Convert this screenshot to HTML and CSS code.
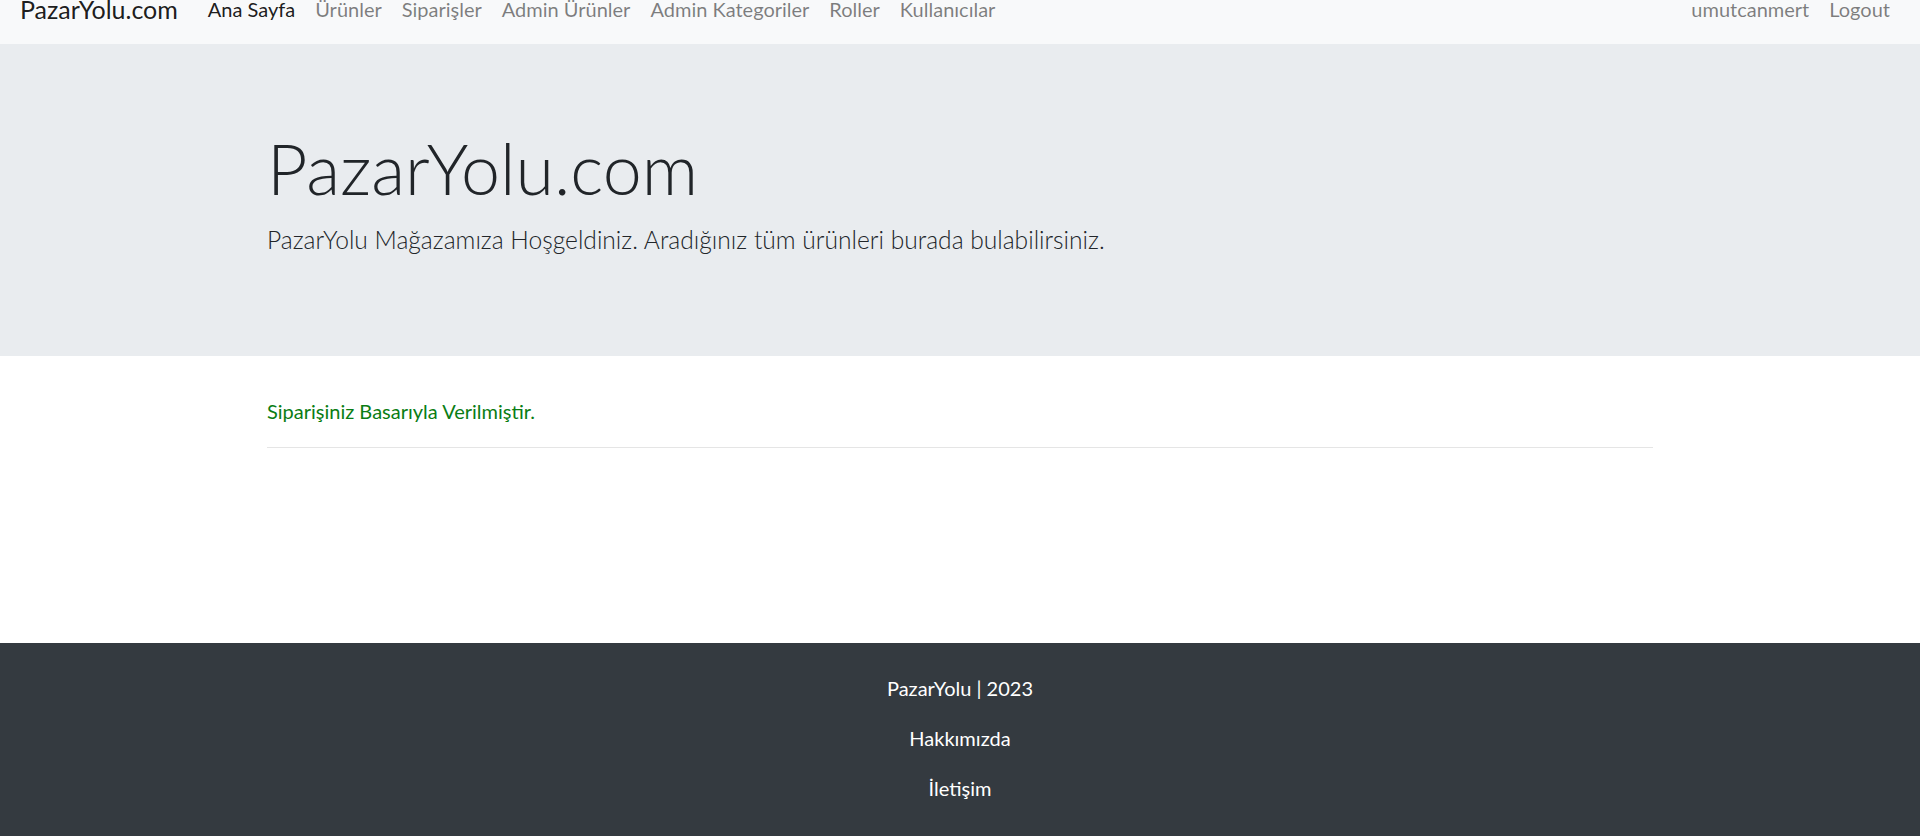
FILE: index.html
```html
<!DOCTYPE html>
<html lang="tr">
<head>
<meta charset="utf-8">
<title>PazarYolu.com</title>
<link rel="stylesheet" href="styles.css">
</head>
<body>
<header class="navbar">
  <a class="brand" href="#">PazarYolu.com</a>
  <ul class="nav">
    <li><a class="nav-link active" href="#">Ana Sayfa</a></li>
    <li><a class="nav-link" href="#">Ürünler</a></li>
    <li><a class="nav-link" href="#">Siparişler</a></li>
    <li><a class="nav-link" href="#">Admin Ürünler</a></li>
    <li><a class="nav-link" href="#">Admin Kategoriler</a></li>
    <li><a class="nav-link" href="#">Roller</a></li>
    <li><a class="nav-link" href="#">Kullanıcılar</a></li>
  </ul>
  <ul class="nav nav-right">
    <li><a class="nav-link" href="#">umutcanmert</a></li>
    <li><a class="nav-link" href="#">Logout</a></li>
  </ul>
</header>

<section class="jumbotron">
  <div class="container">
    <h1 class="display">PazarYolu.com</h1>
    <p class="lead">PazarYolu Mağazamıza Hoşgeldiniz. Aradığınız tüm ürünleri burada bulabilirsiniz.</p>
  </div>
</section>

<main class="main">
  <div class="container">
    <p class="success">Siparişiniz Basarıyla Verilmiştir.</p>
    <hr class="divider">
  </div>
</main>

<footer class="footer">
  <p>PazarYolu | 2023</p>
  <p><a href="#">Hakkımızda</a></p>
  <p><a href="#">İletişim</a></p>
</footer>
</body>
</html>
```

FILE: styles.css
```css
* { box-sizing: border-box; }

html, body { margin: 0; padding: 0; }

body {
  font-family: Lato, "Open Sans", "DejaVu Sans", sans-serif;
  font-size: 20px;
  line-height: 1.5;
  color: #212529;
  background: #fff;
  min-height: 836px;
  display: flex;
  flex-direction: column;
  overflow: hidden;
}

a { text-decoration: none; }

.navbar {
  display: flex;
  align-items: center;
  height: 70px;
  margin-top: -26px;
  padding: 10px 20px;
  background: #f8f9fa;
  flex-shrink: 0;
}

.brand {
  font-size: 25px;
  line-height: 37.5px;
  padding: 7px 0 5.5px;
  margin-right: 20px;
  color: rgba(0, 0, 0, 0.9);
}

.nav {
  display: flex;
  list-style: none;
  margin: 0;
  padding: 0;
}

.nav-right { margin-left: auto; }

.nav-link {
  display: block;
  padding: 10px;
  line-height: 30px;
  color: rgba(0, 0, 0, 0.5);
}

.nav-link.active { color: rgba(0, 0, 0, 0.9); }

.jumbotron {
  background: #e9ecef;
  padding: 82px 0 78px;
  margin-bottom: 40px;
  flex-shrink: 0;
}

.container {
  width: 1386px;
  margin: 0 auto;
}

.display {
  font-size: 70px;
  font-weight: 300;
  line-height: 84px;
  margin: 0 0 11px;
}

.lead {
  font-size: 24.6px;
  font-weight: 300;
  line-height: 37.5px;
  margin: 0 0 19.5px;
}

.main { flex: 1; }

.success {
  color: #0a7d14;
  margin: 0;
  line-height: 30px;
}

.divider {
  border: 0;
  border-top: 1px solid rgba(0, 0, 0, 0.1);
  margin: 21px 0 0;
}

.footer {
  background: #343a40;
  color: #fff;
  text-align: center;
  padding: 30px 0 33px;
  flex-shrink: 0;
}

.footer p {
  margin: 0 0 20px;
  line-height: 30px;
}

.footer p:last-child { margin-bottom: 0; }

.footer a { color: #fff; }
```
